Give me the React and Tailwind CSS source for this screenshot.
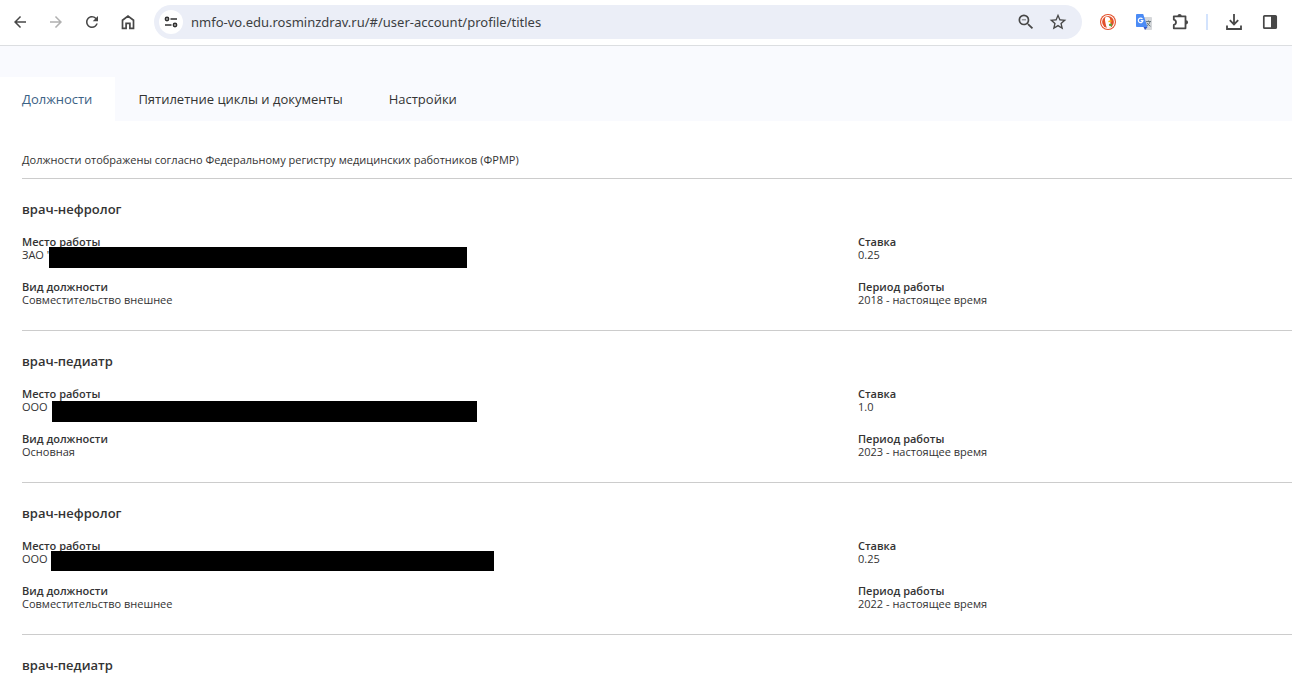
import React from 'react';
import { MdArrowBack, MdArrowForward, MdRefresh, MdStarOutline, MdZoomOut } from 'react-icons/md';

const tabs = [
  { title: 'Должности', active: true },
  { title: 'Пятилетние циклы и документы', active: false },
  { title: 'Настройки', active: false },
];

const positions = [
  {
    title: 'врач-нефролог',
    place: 'ЗАО "',
    bar: 'left-[27px] -top-px w-[418px] h-[21px]',
    kind: 'Совместительство внешнее',
    rate: '0.25',
    period: '2018 - настоящее время',
  },
  {
    title: 'врач-педиатр',
    place: 'ООО',
    bar: 'left-[30px] top-px w-[425px] h-[21px]',
    kind: 'Основная',
    rate: '1.0',
    period: '2023 - настоящее время',
  },
  {
    title: 'врач-нефролог',
    place: 'ООО',
    bar: 'left-[29px] -top-px w-[443px] h-[20px]',
    kind: 'Совместительство внешнее',
    rate: '0.25',
    period: '2022 - настоящее время',
  },
  { title: 'врач-педиатр' },
];

function IconButton({ label, className = 'text-[#474747]', children }) {
  return (
    <button type="button" aria-label={label} className={`flex size-5 shrink-0 items-center justify-center ${className}`}>
      {children}
    </button>
  );
}

function HomeIcon() {
  return (
    <svg viewBox="0 0 16 16" className="size-4" fill="none" stroke="currentColor" strokeWidth="1.7">
      <path d="M2.5 6.2 8 2l5.5 4.2v8.2H9.9V9.3H6.1v5.1H2.5z" />
    </svg>
  );
}

function TuneIcon() {
  return (
    <svg viewBox="0 0 14 12" className="h-3 w-3.5" fill="none" stroke="#303030" strokeWidth="1.6">
      <circle cx="3" cy="3" r="1.6" />
      <path d="M6.5 3H13M1 9h6.5" />
      <circle cx="11" cy="9" r="1.6" />
    </svg>
  );
}

function DuckIcon() {
  return (
    <svg viewBox="0 0 16 16" className="size-4">
      <circle cx="8" cy="8" r="8" fill="#e2512b" />
      <circle cx="8" cy="8" r="6.9" fill="#fff" />
      <circle cx="8" cy="8" r="5.9" fill="#e2512b" />
      <path d="M5.500 3.300C7.400 2.200 10 3.200 10.200 5.600l.2 3.200.6 4.400c-1.200.7-2.800.9-4.200.5C6 11.500 5.300 8.500 5 6.300c-.1-1.200 0-2.300.5-3z" fill="#fff" />
      <path d="M8.400 6.900c1.200-.5 2.500-.4 3.500-.1-.6 1.200-2 1.500-3.500 1.400z" fill="#fdc20a" />
      <path d="M8.900 10.100l3-.7v3l-2.800-.7z" fill="#55a83c" />
    </svg>
  );
}

function TranslateIcon() {
  return (
    <svg viewBox="0 0 16 16" className="size-4">
      <path d="M7 3h8.200c.4 0 .8.400.8.800v11.400c0 .4-.4.800-.8.800H9z" fill="#d5d7da" />
      <path d="M10 7.500h5M12.500 6.500v1M14 7.500c-.4 2-1.800 3.700-3.500 4.700M11 8.800c.8 1.500 2 2.700 3.600 3.500" fill="none" stroke="#5f7177" strokeWidth="0.900" />
      <path d="M7.500 13h4L9 16z" fill="#3456c4" />
      <path d="M.8 0h6.400L11.500 13H.8a.8.800 0 0 1-.8-.8V.8C0 .4.400 0 .8 0z" fill="#4b8bf5" />
      <path d="M6.500 5a2.300 2.300 0 1 0 .4 1.700H4.700" fill="none" stroke="#fff" strokeWidth="1.200" />
    </svg>
  );
}

function PuzzleIcon() {
  return (
    <svg viewBox="0 0 18 18" className="size-[18px] shrink-0">
      <path d="M2.800 3.300h11.700v12H2.800v-3.400c1.500-.3 2.200-1.200 2.200-2.600S4.300 7 2.800 6.700z" fill="none" stroke="#474747" strokeWidth="1.800" strokeLinejoin="round" />
      <path d="M6.500 3a2.100 2.100 0 0 1 4.200 0zM15 7.200a2.100 2.100 0 0 1 0 4.200z" fill="#474747" />
    </svg>
  );
}

function DownloadIcon() {
  return (
    <svg viewBox="0 0 16 16" className="size-4" fill="none" stroke="currentColor" strokeWidth="1.800">
      <path d="M8 0v10M3.800 6.200 8 10.400l4.200-4.200M1 11.500V15h14v-3.500" />
    </svg>
  );
}

function SidePanelIcon() {
  return (
    <svg viewBox="0 0 16 16" className="size-4">
      <rect x="1.800" y="1.800" width="12.400" height="12.400" rx="0.800" fill="none" stroke="#474747" strokeWidth="1.700" />
      <path d="M9 2h5v12H9z" fill="#474747" />
    </svg>
  );
}

function Toolbar() {
  return (
    <header className="flex items-center border-b border-[#dcdee1] bg-white pt-[5px] pr-3 pb-[6px] pl-[10px]">
      <nav className="flex gap-4">
        <IconButton label="Назад"><MdArrowBack size={18} /></IconButton>
        <IconButton label="Вперёд" className="text-[#b0b0b0]"><MdArrowForward size={18} /></IconButton>
        <IconButton label="Обновить"><MdRefresh size={18} /></IconButton>
        <IconButton label="Главная"><HomeIcon /></IconButton>
      </nav>
      <div className="ml-4 flex h-[34px] flex-1 items-center rounded-full bg-[#ebeef7] pr-[14px] pl-[5px]">
        <span className="flex size-6 shrink-0 items-center justify-center rounded-full bg-white">
          <TuneIcon />
        </span>
        <input
          type="text"
          aria-label="Адресная строка"
          defaultValue="nmfo-vo.edu.rosminzdrav.ru/#/user-account/profile/titles"
          className="ml-2 min-w-0 flex-1 bg-transparent font-['Noto_Sans',sans-serif] text-[13px] leading-5 text-[#3c3e42] outline-none"
        />
        <div className="flex gap-3">
          <IconButton label="Масштаб"><MdZoomOut size={20} /></IconButton>
          <IconButton label="В закладки"><MdStarOutline size={20} /></IconButton>
        </div>
      </div>
      <div className="ml-4 flex items-center gap-4">
        <IconButton label="DuckDuckGo"><DuckIcon /></IconButton>
        <IconButton label="Переводчик"><TranslateIcon /></IconButton>
        <IconButton label="Расширения"><PuzzleIcon /></IconButton>
        <span className="h-4 w-[2px] bg-[#d3e3fd]" />
        <IconButton label="Загрузки"><DownloadIcon /></IconButton>
        <IconButton label="Боковая панель"><SidePanelIcon /></IconButton>
      </div>
    </header>
  );
}

function Field({ label, value, bar }) {
  return (
    <div>
      <dt className="font-semibold">{label}</dt>
      <dd className="relative">
        {value}
        {bar && <span className={`absolute bg-black ${bar}`} />}
      </dd>
    </div>
  );
}

export default function App() {
  return (
    <div className="min-h-screen bg-white font-['Open_Sans','Noto_Sans',sans-serif] text-[#333]">
      <Toolbar />

      {/* Tabs */}
      <nav className="flex bg-[#f9fafe] pt-[31px]">
        {tabs.map((tab) => (
          <a
            key={tab.title}
            href="#"
            className={`px-[23px] py-3 text-[13px] leading-5 first:pl-[22px] ${tab.active ? 'bg-white text-[#3b6285]' : 'text-[#333]'}`}
          >
            {tab.title}
          </a>
        ))}
      </nav>

      {/* Positions */}
      <main className="pl-[22px]">
        <p className="pt-[31px] pb-[10px] text-[11px] leading-4">
          Должности отображены согласно Федеральному регистру медицинских работников (ФРМР)
        </p>
        {positions.map((item, idx) => (
          <section key={idx} className="border-t border-[#ccc] pt-5">
            <h2 className="text-[13px] leading-5 font-semibold">{item.title}</h2>
            {item.place && (
              <dl className="mt-4 grid grid-cols-[2fr_1fr] gap-y-[19px] pr-4 pb-6 text-[11px] leading-[13px]">
                <Field label="Место работы" value={item.place} bar={item.bar} />
                <Field label="Ставка" value={item.rate} />
                <Field label="Вид должности" value={item.kind} />
                <Field label="Период работы" value={item.period} />
              </dl>
            )}
          </section>
        ))}
      </main>
    </div>
  );
}
